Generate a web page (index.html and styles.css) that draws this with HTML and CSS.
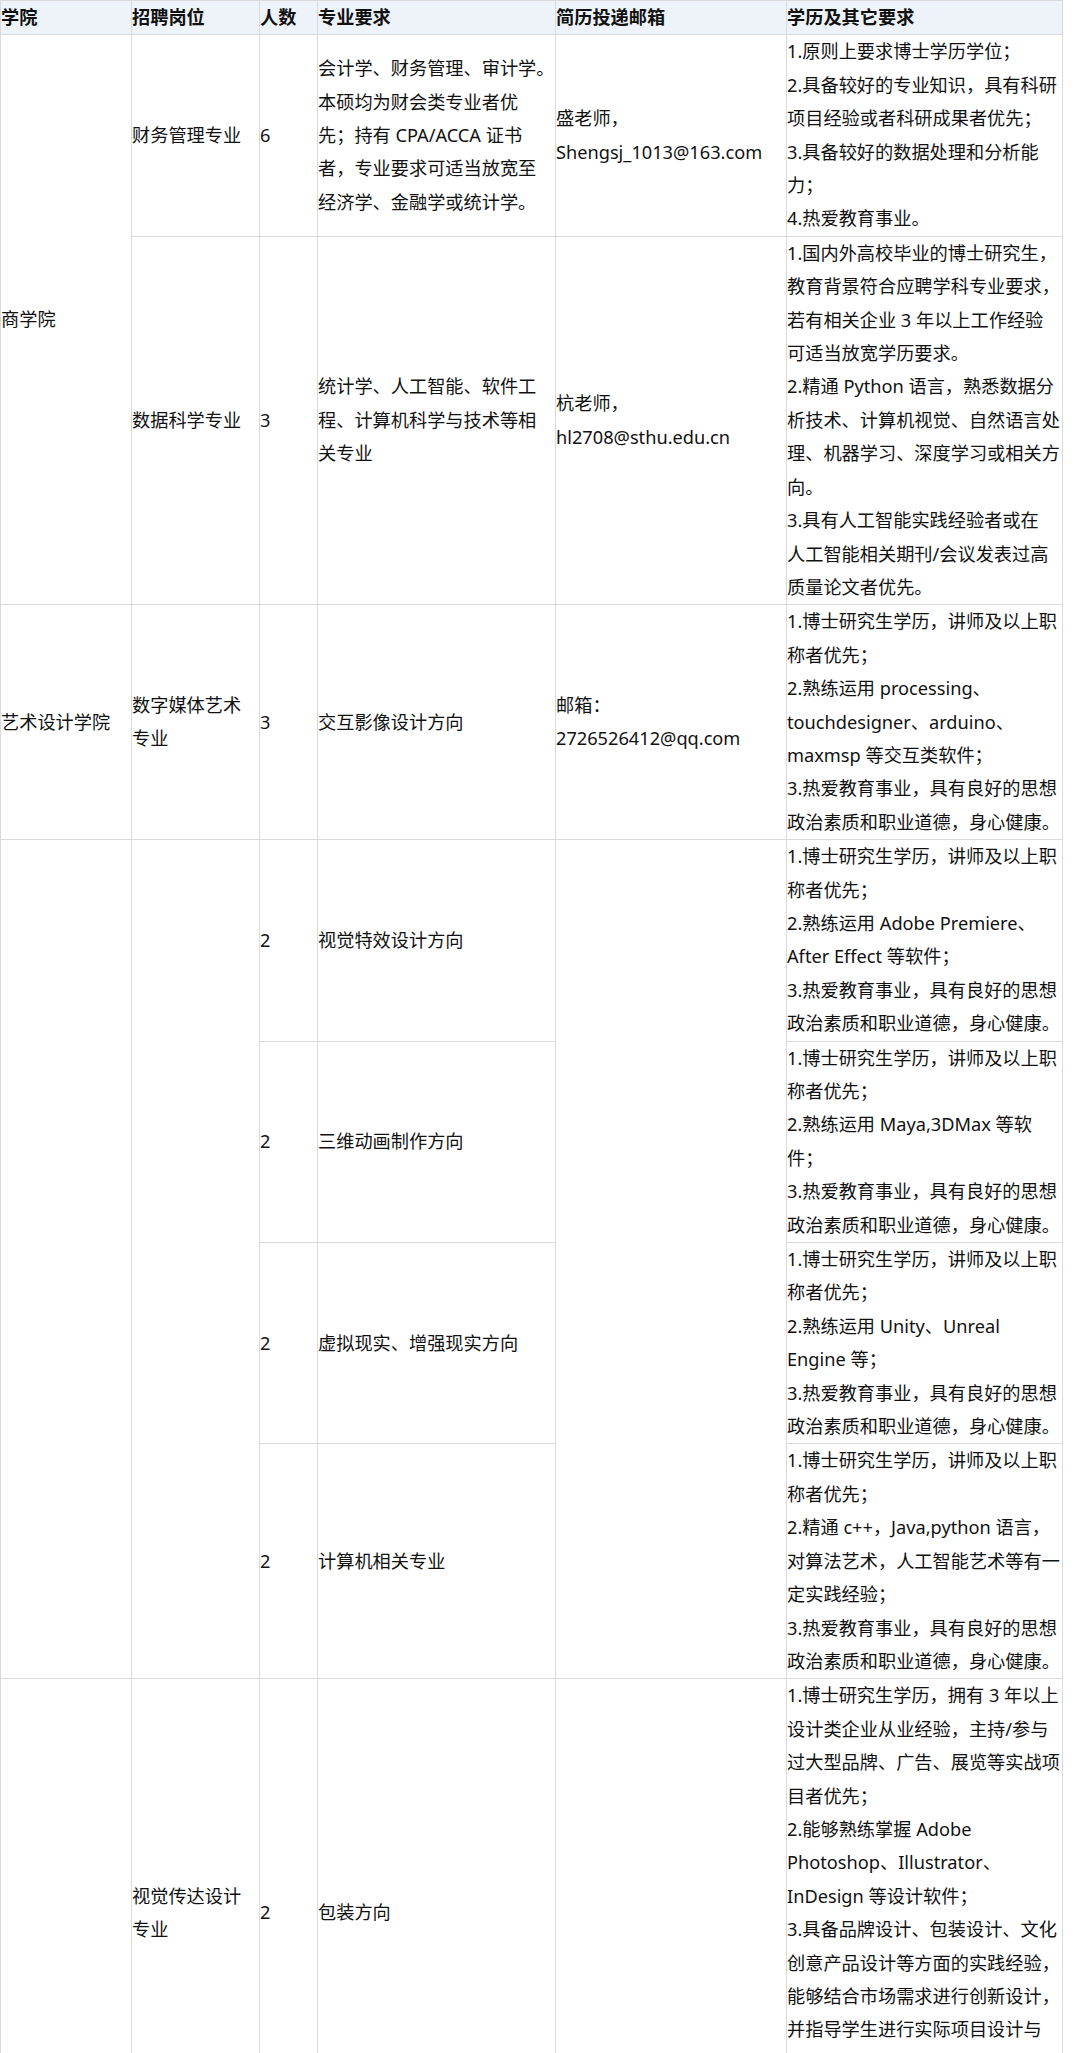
FILE: index.html
```html
<!DOCTYPE html>
<html lang="zh-CN">
<head>
<meta charset="utf-8">
<title>招聘岗位</title>
<link rel="stylesheet" href="styles.css">
</head>
<body>
<table class="jobs">
  <colgroup>
    <col class="w-college">
    <col class="w-post">
    <col class="w-num">
    <col class="w-major">
    <col class="w-mail">
    <col class="w-req">
  </colgroup>
  <thead>
    <tr>
      <th><div class="c">学院</div></th>
      <th><div class="c">招聘岗位</div></th>
      <th><div class="c">人数</div></th>
      <th><div class="c">专业要求</div></th>
      <th><div class="c">简历投递邮箱</div></th>
      <th><div class="c">学历及其它要求</div></th>
    </tr>
  </thead>
  <tbody>
    <tr>
      <td rowspan="2"><div class="c">商学院</div></td>
      <td><div class="c">财务管理专业</div></td>
      <td><div class="c">6</div></td>
      <td><div class="c">会计学、财务管理、审计学。<br>本硕均为财会类专业者优<br>先；持有 CPA/ACCA 证书<br>者，专业要求可适当放宽至<br>经济学、金融学或统计学。</div></td>
      <td><div class="c">盛老师，<br>Shengsj_1013@163.com</div></td>
      <td><div class="c">1.原则上要求博士学历学位；<br>2.具备较好的专业知识，具有科研<br>项目经验或者科研成果者优先；<br>3.具备较好的数据处理和分析能<br>力；<br>4.热爱教育事业。</div></td>
    </tr>
    <tr>
      <td><div class="c">数据科学专业</div></td>
      <td><div class="c">3</div></td>
      <td><div class="c">统计学、人工智能、软件工<br>程、计算机科学与技术等相<br>关专业</div></td>
      <td><div class="c">杭老师，<br>hl2708@sthu.edu.cn</div></td>
      <td><div class="c">1.国内外高校毕业的博士研究生，<br>教育背景符合应聘学科专业要求，<br>若有相关企业 3 年以上工作经验<br>可适当放宽学历要求。<br>2.精通 Python 语言，熟悉数据分<br>析技术、计算机视觉、自然语言处<br>理、机器学习、深度学习或相关方<br>向。<br>3.具有人工智能实践经验者或在<br>人工智能相关期刊/会议发表过高<br>质量论文者优先。</div></td>
    </tr>
    <tr>
      <td><div class="c">艺术设计学院</div></td>
      <td><div class="c">数字媒体艺术<br>专业</div></td>
      <td><div class="c">3</div></td>
      <td><div class="c">交互影像设计方向</div></td>
      <td><div class="c">邮箱：<br>2726526412@qq.com</div></td>
      <td><div class="c">1.博士研究生学历，讲师及以上职<br>称者优先；<br>2.熟练运用 processing、<br>touchdesigner、arduino、<br>maxmsp 等交互类软件；<br>3.热爱教育事业，具有良好的思想<br>政治素质和职业道德，身心健康。</div></td>
    </tr>
    <tr>
      <td rowspan="4"><div class="c"></div></td>
      <td rowspan="4"><div class="c"></div></td>
      <td><div class="c">2</div></td>
      <td><div class="c">视觉特效设计方向</div></td>
      <td rowspan="4"><div class="c"></div></td>
      <td><div class="c">1.博士研究生学历，讲师及以上职<br>称者优先；<br>2.熟练运用 Adobe Premiere、<br>After Effect 等软件；<br>3.热爱教育事业，具有良好的思想<br>政治素质和职业道德，身心健康。</div></td>
    </tr>
    <tr>
      <td><div class="c">2</div></td>
      <td><div class="c">三维动画制作方向</div></td>
      <td><div class="c">1.博士研究生学历，讲师及以上职<br>称者优先；<br>2.熟练运用 Maya,3DMax 等软<br>件；<br>3.热爱教育事业，具有良好的思想<br>政治素质和职业道德，身心健康。</div></td>
    </tr>
    <tr>
      <td><div class="c">2</div></td>
      <td><div class="c">虚拟现实、增强现实方向</div></td>
      <td><div class="c">1.博士研究生学历，讲师及以上职<br>称者优先；<br>2.熟练运用 Unity、Unreal<br>Engine 等；<br>3.热爱教育事业，具有良好的思想<br>政治素质和职业道德，身心健康。</div></td>
    </tr>
    <tr>
      <td><div class="c">2</div></td>
      <td><div class="c">计算机相关专业</div></td>
      <td><div class="c">1.博士研究生学历，讲师及以上职<br>称者优先；<br>2.精通 c++，Java,python 语言，<br>对算法艺术，人工智能艺术等有一<br>定实践经验；<br>3.热爱教育事业，具有良好的思想<br>政治素质和职业道德，身心健康。</div></td>
    </tr>
    <tr>
      <td><div class="c"></div></td>
      <td><div class="c">视觉传达设计<br>专业</div></td>
      <td><div class="c">2</div></td>
      <td><div class="c">包装方向</div></td>
      <td><div class="c"></div></td>
      <td><div class="c">1.博士研究生学历，拥有 3 年以上<br>设计类企业从业经验，主持/参与<br>过大型品牌、广告、展览等实战项<br>目者优先；<br>2.能够熟练掌握 Adobe<br>Photoshop、Illustrator、<br>InDesign 等设计软件；<br>3.具备品牌设计、包装设计、文化<br>创意产品设计等方面的实践经验，<br>能够结合市场需求进行创新设计，<br>并指导学生进行实际项目设计与<br>实践；<br>4.热爱教育事业，具有良好的思想<br>政治素质和职业道德，身心健康。</div></td>
    </tr>
  </tbody>
</table>
</body>
</html>
```

FILE: styles.css
```css
html, body {
  margin: 0;
  padding: 0;
  background: #ffffff;
}

body {
  font-family: "Noto Sans", "Noto Sans CJK SC", sans-serif;
  font-size: 18.2px;
  color: #111111;
}

.jobs {
  border-collapse: collapse;
  table-layout: fixed;
  width: 1062px;
}

.w-college { width: 131px; }
.w-post { width: 128px; }
.w-num { width: 58px; }
.w-major { width: 238px; }
.w-mail { width: 231px; }
.w-req { width: 276px; }

.jobs th,
.jobs td {
  border: 1px solid #dadada;
  padding: 0;
  text-align: left;
  vertical-align: middle;
  white-space: nowrap;
  line-height: 33.4px;
}

.jobs th {
  background: #eef3f9;
  font-weight: 700;
}

.c {
  overflow: visible;
}
```
